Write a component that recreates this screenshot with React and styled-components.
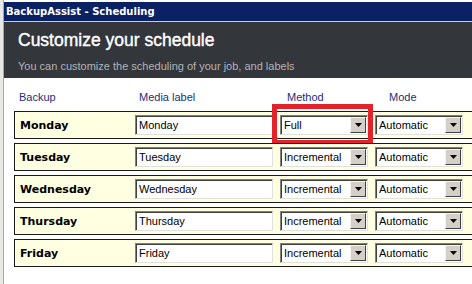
import React from "react";
import styled, { createGlobalStyle } from "styled-components";

const GlobalStyle = createGlobalStyle`
  html, body { margin: 0; padding: 0; background: #ffffff; }
  body { width: 472px; height: 284px; overflow: hidden; font-family: "Liberation Sans", Arial, sans-serif; }
`;

const Screen = styled.div`
  display: flex;
  width: 472px;
  height: 284px;
  overflow: hidden;
  background: #ffffff;
`;

const Frame = styled.div`
  width: 3px;
  flex: none;
  background: #e8e8e4;
  border-right: 1px solid #a8a8a8;
`;

const Window = styled.div`
  flex: 1;
  display: flex;
  flex-direction: column;
  min-width: 0;
`;

const TitleBar = styled.div`
  height: 19px;
  margin-top: 2px;
  background: #0a2163;
  border-bottom: 1px solid #c8ccd8;
  color: #ffffff;
  font-family: "DejaVu Sans", Tahoma, sans-serif;
  font-weight: bold;
  font-size: 10px;
  line-height: 19px;
  padding-left: 2px;
`;

const Header = styled.div`
  height: 56px;
  background: #33363b;
  padding: 7px 0 0 14px;
  box-sizing: border-box;
`;

const Heading = styled.h1`
  margin: 0;
  color: #ffffff;
  font-family: "Liberation Sans", Arial, sans-serif;
  font-size: 17.5px;
  font-weight: normal;
  -webkit-text-stroke: 0.4px #ffffff;
  line-height: 22px;
`;

const Subtitle = styled.p`
  margin: 8px 0 0;
  color: #b2b4b8;
  font-family: "Liberation Sans", Arial, sans-serif;
  font-size: 11px;
  line-height: 14px;
`;

const Content = styled.div`
  position: relative;
  padding: 10px 0 0 10px;
  display: flex;
  flex-direction: column;
  gap: 4px;
`;

const Columns = styled.div`
  display: grid;
  grid-template-columns: 108px 138px 88px 88px;
  column-gap: 7px;
  padding-left: 5px;
`;

const HeaderRow = styled(Columns)`
  height: 17px;
  margin-bottom: 2px;
  align-items: center;
`;

const ColHead = styled.span`
  color: #1c2d80;
  font-size: 11px;
  padding-left: ${(p) => p.$indent || 0}px;
`;

const DayRow = styled(Columns)`
  position: relative;
  height: 26px;
  width: 480px;
  align-items: center;
  background: #ffffe1;
  border: 1px solid #1a1a1a;
`;

const DayName = styled.span`
  font-family: "DejaVu Sans", Tahoma, sans-serif;
  font-size: 11px;
  font-weight: bold;
  color: #000000;
`;

const Sunken = styled.div`
  height: 20px;
  box-sizing: border-box;
  background: #ffffff;
  border-top: 1px solid #808080;
  border-left: 1px solid #808080;
  border-right: 1px solid #e0e0dc;
  border-bottom: 1px solid #e0e0dc;
  box-shadow: inset 1px 1px 0 #404040;
  display: flex;
  align-items: center;
  font-size: 11px;
  color: #000000;
  padding-left: 3px;
`;

const TextBox = styled(Sunken)``;

const Select = styled(Sunken)`
  justify-content: space-between;
  padding-right: 1px;
`;

const DropButton = styled.span`
  width: 16px;
  height: 16px;
  box-sizing: border-box;
  background: #d4d0c8;
  border-top: 1px solid #f4f4f0;
  border-left: 1px solid #f4f4f0;
  border-right: 1px solid #404040;
  border-bottom: 1px solid #404040;
  display: flex;
  align-items: center;
  justify-content: center;
`;

const Highlight = styled.div`
  position: absolute;
  left: 257px;
  top: -8px;
  width: 101px;
  height: 41px;
  box-sizing: border-box;
  border: 5px solid #e3232b;
  pointer-events: none;
`;

const Arrow = () => (
  <svg width="7" height="4" viewBox="0 0 7 4">
    <path d="M0 0H7L3.5 4Z" fill="#000" />
  </svg>
);

const days = [
  { day: "Monday", method: "Full", marked: true },
  { day: "Tuesday", method: "Incremental" },
  { day: "Wednesday", method: "Incremental" },
  { day: "Thursday", method: "Incremental" },
  { day: "Friday", method: "Incremental" },
];

const App = () => (
  <>
    <GlobalStyle />
    <Screen>
      <Frame />
      <Window>
        <TitleBar>BackupAssist - Scheduling</TitleBar>
        <Header>
          <Heading>Customize your schedule</Heading>
          <Subtitle>You can customize the scheduling of your job, and labels</Subtitle>
        </Header>
        <Content>
          <HeaderRow>
            <ColHead $indent={-1}>Backup</ColHead>
            <ColHead $indent={5}>Media label</ColHead>
            <ColHead $indent={8}>Method</ColHead>
            <ColHead $indent={15}>Mode</ColHead>
          </HeaderRow>
          {days.map((d) => (
            <DayRow key={d.day}>
              <DayName>{d.day}</DayName>
              <TextBox>{d.day}</TextBox>
              <Select>
                {d.method}
                <DropButton><Arrow /></DropButton>
              </Select>
              <Select>
                Automatic
                <DropButton><Arrow /></DropButton>
              </Select>
              {d.marked && <Highlight />}
            </DayRow>
          ))}
        </Content>
      </Window>
    </Screen>
  </>
);

export default App;
